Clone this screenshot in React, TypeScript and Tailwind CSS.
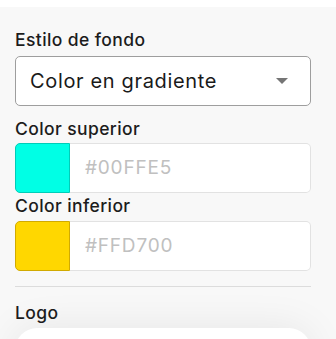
const font = { fontFamily: 'Inter, "Open Sans", sans-serif' };

const ColorRow = ({ swatch, border, value }: { swatch: string; border: string; value: string }) => (
  <div className="flex h-[50px] w-[296px] rounded-[5px] bg-white">
    <div className={`w-[55px] h-full rounded-l-[5px] border ${swatch} ${border}`} />
    <div className="flex-1 flex items-center pl-[15px] border border-l-0 border-[#e2e2e2] rounded-r-[5px] text-[19px] tracking-[0.8px] text-[#c0c0c0]">
      {value}
    </div>
  </div>
);

export default function App() {
  return (
    <div className="w-[336px] h-[339px] overflow-hidden bg-[#f8f8f8] text-[#1c1c1c]" style={font}>
      <div className="h-[7px] bg-white" />
      <div className="px-[15px] w-[326px]">
        <div className="mt-[21px] h-[24px] leading-[24px] text-[17.5px] tracking-[0.4px] font-medium">Estilo de fondo</div>
        <div className="mt-[4px] h-[50px] w-[296px] flex items-center justify-between pl-[14px] pr-[22px] bg-white border border-[#9e9e9e] rounded-[5px]">
          <span className="text-[20px] tracking-[0.65px] text-[#1a1a1a]">Color en gradiente</span>
          <svg width="12" height="6" viewBox="0 0 12 6">
            <path d="M0 0h12L6 6z" fill="#757575" />
          </svg>
        </div>
        <div className="mt-[11px] h-[24px] leading-[24px] text-[17.5px] tracking-[0.4px] font-medium">Color superior</div>
        <div className="mt-[2px]">
          <ColorRow swatch="bg-[#00ffe5]" border="border-[#00cdb8]" value="#00FFE5" />
        </div>
        <div className="mt-[1px] h-[24px] leading-[24px] text-[17.5px] tracking-[0.4px] font-medium">Color inferior</div>
        <div className="mt-[3px]">
          <ColorRow swatch="bg-[#ffd700]" border="border-[#d1aa00]" value="#FFD700" />
        </div>
        <div className="mt-[15px] h-px w-[296px] bg-[#dcdcdc]" />
        <div className="mt-[14px] h-[24px] leading-[24px] text-[17.5px] tracking-[0.4px] font-medium">Logo</div>
        <div className="mt-[3px] h-[60px] w-[296px] rounded-[22px] bg-white shadow-[0_0_40px_rgba(0,0,0,0.08)]" />
      </div>
    </div>
  );
}
